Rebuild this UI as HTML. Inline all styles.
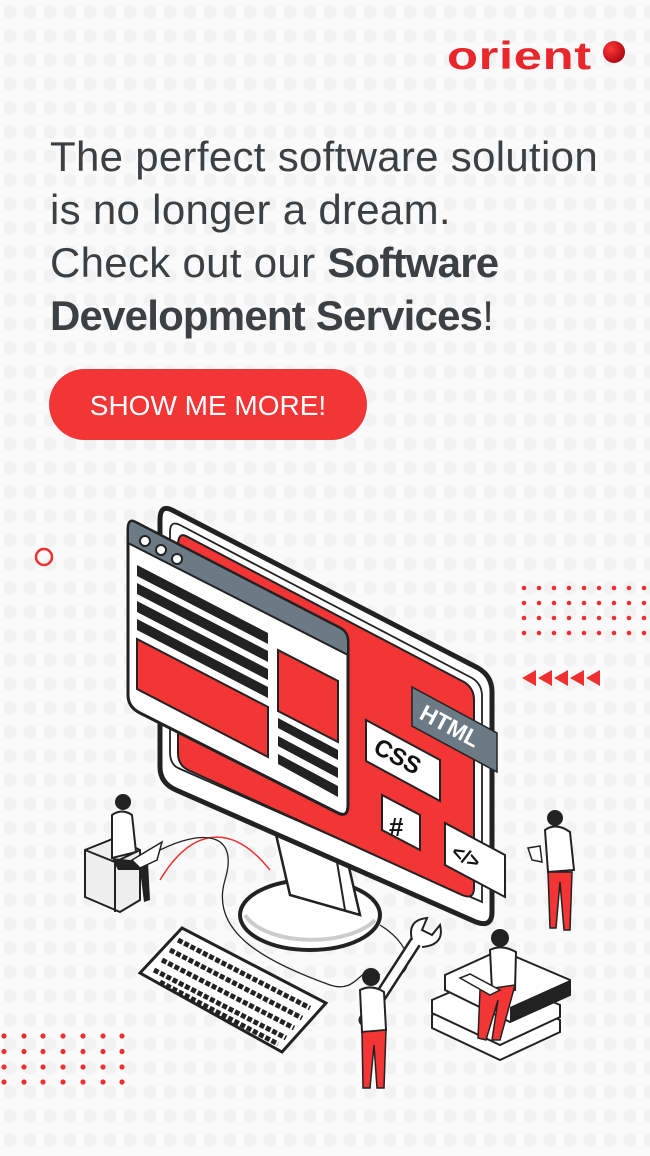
<!DOCTYPE html>
<html><head><meta charset="utf-8"><style>
html,body{margin:0;padding:0;width:650px;height:1156px;overflow:hidden;background:#fafafa}
.wrap{position:relative;width:650px;height:1156px;font-family:"Liberation Sans",sans-serif}
svg.bg{position:absolute;left:0;top:0}
.logo{position:absolute;left:447px;top:35px;font-size:39px;font-weight:bold;color:#e8262b;letter-spacing:0.5px;transform:scaleX(1.3);transform-origin:left}
.ball{position:absolute;left:603px;top:41px;width:22px;height:22px;border-radius:50%;background:radial-gradient(circle at 35% 35%,#ff3a3a,#c0101a 60%,#8a0010)}
.txt{position:absolute;left:50px;top:130px;font-size:42px;line-height:53px;color:#3d4043;letter-spacing:0.3px;white-space:nowrap}
.txt b{font-weight:bold;letter-spacing:-0.8px}
.btn{position:absolute;left:49px;top:369px;width:318px;height:71px;border-radius:36px;background:#f33535;color:#fff;font-size:28px;line-height:73px;text-align:center;letter-spacing:0px}
</style></head><body><div class="wrap">
<svg class="bg" width="650" height="1156" viewBox="0 0 650 1156">
<defs><pattern id="d" width="20" height="24" patternUnits="userSpaceOnUse"><circle cx="10" cy="12" r="6.5" fill="#f0f0f0"/></pattern></defs>
<rect width="650" height="1156" fill="url(#d)" opacity="0.8"/>
<g fill="#f03030">
<g id="r1"><circle cx="524" cy="588" r="2.3"/><circle cx="539" cy="588" r="2.3"/><circle cx="554" cy="588" r="2.3"/><circle cx="569" cy="588" r="2.3"/><circle cx="584" cy="588" r="2.3"/><circle cx="599" cy="588" r="2.3"/><circle cx="614" cy="588" r="2.3"/><circle cx="629" cy="588" r="2.3"/><circle cx="644" cy="588" r="2.3"/></g>
<use href="#r1" y="15"/><use href="#r1" y="30"/><use href="#r1" y="45"/>
<g id="r2"><circle cx="4" cy="1036" r="2.6"/><circle cx="24" cy="1036" r="2.6"/><circle cx="43" cy="1036" r="2.6"/><circle cx="63" cy="1036" r="2.6"/><circle cx="83" cy="1036" r="2.6"/><circle cx="103" cy="1036" r="2.6"/><circle cx="122" cy="1036" r="2.6"/></g>
<use href="#r2" y="15.5"/><use href="#r2" y="31"/><use href="#r2" y="46"/>
<path d="M522 678l14-8v16zM538 678l14-8v16zM554 678l14-8v16zM570 678l14-8v16zM586 678l14-8v16z"/>
</g>
<circle cx="44" cy="557" r="8" fill="none" stroke="#f03030" stroke-width="2.5"/>
<path d="M160 880 C190 830 230 820 270 870" fill="none" stroke="#f03030" stroke-width="1.5"/>
<path d="M160 850 C200 830 240 830 225 880 C210 930 260 960 330 985 C360 995 360 960 380 975" fill="none" stroke="#222" stroke-width="1.3"/>
<path d="M380 925 C420 950 410 980 390 975" fill="none" stroke="#222" stroke-width="1.3"/>
<ellipse cx="310" cy="915" rx="70" ry="35" fill="#fff" stroke="#222" stroke-width="4"/>
<path d="M245 915 a70 35 0 0 0 130 5" fill="none" stroke="#ccc" stroke-width="4"/>
<path d="M275 830 L345 850 L360 915 L290 895 Z" fill="#fff" stroke="#222" stroke-width="2.5"/>
<path d="M335 850 L345 910" stroke="#222" stroke-width="2"/>
<path d="M172 510 L478 668 Q492 676 492 692 L492 912 Q492 928 476 922 L176 790 Q160 783 160 767 L160 520 Q160 504 172 510Z" fill="#fff" stroke="#222" stroke-width="5"/>
<path d="M180 525 L472 678 Q482 684 482 696 L482 902 L178 768 Q170 764 170 752 L170 532 Q170 520 180 525Z" fill="none" stroke="#222" stroke-width="1.8"/>
<path d="M186 536 L464 682 Q474 688 474 700 L474 888 Q474 900 462 895 L188 770 Q178 765 178 753 L178 546 Q178 532 186 536Z" fill="#f33535" stroke="#222" stroke-width="2"/>
<path d="M135 522 L340 628 Q348 632 348 642 L348 805 Q348 818 338 813 L140 713 Q128 707 128 695 L128 530 Q128 518 135 522Z" fill="#fff" stroke="#222" stroke-width="3"/>
<path d="M135 522 L340 628 Q348 632 348 642 L348 655 L128 543 L128 530 Q128 518 135 522Z" fill="#6b7a85" stroke="#222" stroke-width="2"/>
<circle cx="145" cy="541" r="5" fill="#fff" stroke="#222" stroke-width="2"/>
<circle cx="161" cy="550" r="5" fill="#fff" stroke="#222" stroke-width="2"/>
<circle cx="177" cy="559" r="5" fill="#fff" stroke="#222" stroke-width="2"/>
<g fill="#222">
<path d="M137 565 L268 633 L268 644 L137 576Z"/>
<path d="M137 583 L268 651 L268 662 L137 594Z"/>
<path d="M137 601 L268 669 L268 680 L137 612Z"/>
<path d="M137 619 L268 687 L268 698 L137 630Z"/>
<path d="M278 718 L338 750 L338 760 L278 728Z"/>
<path d="M278 736 L338 768 L338 778 L278 746Z"/>
<path d="M278 754 L338 786 L338 797 L278 764Z"/>
</g>
<path d="M137 639 L268 707 L268 757 L137 689Z" fill="#f33535" stroke="#222" stroke-width="2"/>
<path d="M278 650 L338 681 L338 742 L278 711Z" fill="#f33535" stroke="#222" stroke-width="2"/>
<path d="M412 687 L497 733 L497 772 L412 726Z" fill="#6b7a85" stroke="#222" stroke-width="1.5"/>
<text x="418" y="718" fill="#fff" font-size="23" font-weight="bold" transform="rotate(28 418 718)">HTML</text>
<path d="M366 720 L440 760 L440 801 L366 761Z" fill="#fff" stroke="#222" stroke-width="2"/>
<text x="372" y="752" fill="#111" font-size="24" font-weight="bold" transform="rotate(28 372 752)">CSS</text>
<path d="M382 795 L420 815 L420 850 L382 830Z" fill="#fff" stroke="#222" stroke-width="2"/>
<text x="389" y="836" fill="#111" font-size="26" font-weight="bold">#</text>
<path d="M445 823 L505 855 L505 897 L445 865Z" fill="#fff" stroke="#222" stroke-width="2"/>
<text x="450" y="856" fill="#111" font-size="20" font-weight="bold" transform="rotate(28 450 856)">&lt;/&gt;</text>
<path d="M140 973 L182 928 L326 1003 L282 1052 Z" fill="#fff" stroke="#222" stroke-width="3"/>
<g stroke="#222" stroke-width="5" stroke-dasharray="5 2">
<path d="M178 940 L310 1008"/><path d="M170 950 L302 1018"/><path d="M162 960 L294 1028"/><path d="M154 970 L286 1038"/><path d="M160 982 L278 1044"/>
</g>
<path d="M85 850 L115 838 L140 850 L140 900 L120 912 L85 897Z" fill="#eee" stroke="#222" stroke-width="2"/>
<path d="M85 850 L115 862 L140 850 M115 862 L115 912" fill="none" stroke="#222" stroke-width="2"/>
<circle cx="123" cy="802" r="8" fill="#222"/>
<path d="M112 815 Q122 808 132 815 L136 852 L112 858Z" fill="#fff" stroke="#222" stroke-width="2"/>
<path d="M112 858 L148 862 L150 900 L144 902 L140 870 L118 870Z" fill="#222"/>
<path d="M132 860 L162 842 L157 860 L140 868Z" fill="#fff" stroke="#222" stroke-width="1.5"/>
<circle cx="555" cy="818" r="8" fill="#222"/>
<path d="M545 830 Q556 822 570 832 L574 870 L548 872Z" fill="#fff" stroke="#222" stroke-width="2"/>
<path d="M528 848 L540 846 L542 862 L532 860Z" fill="#fff" stroke="#222" stroke-width="1.5"/>
<path d="M548 872 L572 872 L570 930 L564 930 L560 882 L556 928 L550 928Z" fill="#f33535" stroke="#222" stroke-width="1.5"/>
<path d="M365 1020 L420 935" stroke="#222" stroke-width="13" stroke-linecap="round"/>
<path d="M365 1020 L420 935" stroke="#fff" stroke-width="8" stroke-linecap="round"/>
<path d="M412 940 q-5 -20 15 -22 l-5 12 l10 5 l8 -10 q5 20 -18 22" fill="#fff" stroke="#222" stroke-width="2"/>
<circle cx="371" cy="977" r="9" fill="#222"/>
<path d="M360 990 Q372 984 384 992 L386 1030 L362 1032Z" fill="#fff" stroke="#222" stroke-width="2"/>
<path d="M362 1032 L386 1030 L384 1088 L377 1088 L374 1045 L370 1088 L363 1088Z" fill="#f33535" stroke="#222" stroke-width="1.5"/>
<g fill="#fff" stroke="#222" stroke-width="2">
<path d="M432 1015 L490 990 L560 1020 L560 1032 L500 1060 L432 1028Z"/>
<path d="M432 1000 L490 975 L560 1005 L560 1017 L500 1045 L432 1013Z"/>
<path d="M445 975 L500 950 L570 980 L570 995 L510 1022 L445 990Z"/>
</g>
<path d="M510 1022 L570 995 L570 980 L510 1007Z" fill="#222"/>
<circle cx="500" cy="938" r="9" fill="#222"/>
<path d="M490 950 Q502 944 516 952 L515 990 L492 990Z" fill="#fff" stroke="#222" stroke-width="2"/>
<path d="M480 990 L515 985 L500 1040 L492 1040 L498 1000 L486 1040 L478 1038Z" fill="#f33535" stroke="#222" stroke-width="1.5"/>
<path d="M460 978 L490 995 L500 990 L470 974Z" fill="#fff" stroke="#222" stroke-width="1.5"/>
</svg>
<div class="logo">orient</div><div class="ball"></div>
<div class="txt">The perfect software solution<br>is no longer a dream.<br>Check out our <b>Software</b><br><b>Development Services</b>!</div>
<div class="btn">SHOW ME MORE!</div>
</div></body></html>
